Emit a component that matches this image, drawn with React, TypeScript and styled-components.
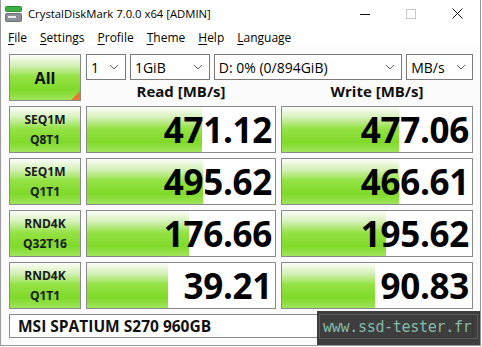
import React from 'react';
import styled, { createGlobalStyle } from 'styled-components';

// Types
interface Result {
  label: [string, string];
  read: number;
  write: number;
}

const results: Result[] = [
  { label: ['SEQ1M', 'Q8T1'], read: 471.12, write: 477.06 },
  { label: ['SEQ1M', 'Q1T1'], read: 495.62, write: 466.61 },
  { label: ['RND4K', 'Q32T16'], read: 176.66, write: 195.62 },
  { label: ['RND4K', 'Q1T1'], read: 39.21, write: 90.83 },
];

// log scale bar, like the app does
const barWidth = (v: number) => `${Math.min(100, (0.171 * Math.log10(v) + 0.157) * 100)}%`;

const GlobalStyle = createGlobalStyle`
  html, body {
    margin: 0;
    padding: 0;
    background: #ffffff;
  }
  body {
    font-family: "Open Sans", "Noto Sans", sans-serif;
  }
`;

const green = `linear-gradient(to bottom, #fbfdf8 0%, #d4f0b6 24%, #94e244 48%, #80d92a 78%, #9fe55a 100%)`;

// Styled Components
const Window = styled.div`
  position: relative;
  width: 481px;
  height: 346px;
  box-sizing: border-box;
  border-left: 1px solid #9a9a9a;
  border-right: 1px solid #9a9a9a;
  border-bottom: 1px solid #9a9a9a;
  background: #fbfbfb;
  overflow: hidden;
`;

const TitleBar = styled.div`
  display: flex;
  align-items: center;
  height: 27px;
  background: #ffffff;
  padding-left: 4px;
`;

const Title = styled.span`
  margin-left: 6px;
  font-size: 11.3px;
  color: #000;
  flex: 1;
`;

const Controls = styled.div`
  display: flex;
  height: 100%;
`;

const ControlButton = styled.div`
  width: 46px;
  display: flex;
  align-items: center;
  justify-content: center;
`;

const MenuBar = styled.div`
  display: flex;
  height: 20px;
  align-items: center;
  background: #ffffff;
  padding-left: 7px;
  gap: 13px;
  font-size: 12px;
  color: #000;
`;

const MenuItem = styled.span`
  u {
    text-decoration: underline;
    text-underline-offset: 2px;
  }
`;

const Body = styled.div`
  display: grid;
  grid-template-columns: 72px 190px 192px;
  grid-template-rows: 47px repeat(4, 47px) 24px;
  column-gap: 5px;
  row-gap: 5px;
  padding: 7px 0 0 8px;
`;

const AllButton = styled.div`
  position: relative;
  border: 1px solid #8a8a8a;
  background: ${green};
  display: flex;
  align-items: center;
  justify-content: center;
  font-size: 16px;
  font-weight: 700;
  color: #111;
  overflow: hidden;

  &::after {
    content: '';
    position: absolute;
    right: 0;
    bottom: 0;
    border-style: solid;
    border-width: 0 0 9px 9px;
    border-color: transparent transparent #e8782a transparent;
  }
`;

const TopArea = styled.div`
  grid-column: 2 / 4;
  display: grid;
  grid-template-columns: 190px 192px;
  grid-template-rows: 26px 1fr;
  column-gap: 5px;
`;

const Combos = styled.div`
  grid-column: 1 / 3;
  display: flex;
  gap: 4px;
`;

const Combo = styled.div<{ w: number }>`
  width: ${({ w }) => w}px;
  box-sizing: border-box;
  border: 1px solid #7a7a7a;
  background: #fff;
  display: flex;
  align-items: center;
  justify-content: space-between;
  padding: 0 6px 0 4px;
  font-size: 14px;
  color: #000;
`;

const Header = styled.div`
  display: flex;
  align-items: center;
  justify-content: center;
  font-size: 15px;
  font-weight: 700;
  color: #111;
`;

const LabelCell = styled.div`
  border: 1px solid #8a8a8a;
  background: ${green};
  display: flex;
  flex-direction: column;
  align-items: center;
  justify-content: center;
  font-size: 12px;
  font-weight: 700;
  line-height: 20px;
  color: #1a1a1a;
`;

const ValueCell = styled.div`
  position: relative;
  border: 1px solid #8a8a8a;
  background: #fff;
  overflow: hidden;
`;

const Bar = styled.div`
  position: absolute;
  left: 0;
  top: 0;
  bottom: 0;
  background: ${green};
`;

const Value = styled.div`
  position: relative;
  height: 100%;
  display: flex;
  align-items: center;
  justify-content: flex-end;
  padding-right: 3px;
  font-size: 35px;
  font-weight: 700;
  letter-spacing: -0.3px;
  color: #000;
`;

const ModelBox = styled.div`
  grid-column: 1 / 4;
  border: 1px solid #8a8a8a;
  background: #fff;
  display: flex;
  align-items: center;
  padding-left: 8px;
  font-size: 15.5px;
  font-weight: 700;
  color: #111;
`;

const Watermark = styled.div`
  position: absolute;
  left: 316px;
  top: 311px;
  width: 170px;
  height: 40px;
  background: rgba(52, 52, 52, 0.95);
  padding: 3px 0 0 2px;
  box-sizing: border-box;
`;

const WatermarkInner = styled.div`
  width: 154px;
  height: 23px;
  border: 1px solid #5a5a5a;
  display: flex;
  align-items: center;
  padding-left: 3px;
  font-family: "DejaVu Sans Mono", "Liberation Mono", monospace;
  font-size: 15px;
  letter-spacing: -0.3px;
  color: #86bcaa;
  white-space: nowrap;
`;

const Chevron = () => (
  <svg width="10" height="6" viewBox="0 0 10 6">
    <path d="M1 1 L5 5 L9 1" fill="none" stroke="#606060" strokeWidth="1" />
  </svg>
);

const AppIcon = () => (
  <svg width="17" height="16" viewBox="0 0 17 16">
    <rect x="0.5" y="0.5" width="16" height="5" rx="1" fill="#3cb043" stroke="#2a8a30" />
    <rect x="0.5" y="7.5" width="16" height="8" rx="1" fill="#8a9096" stroke="#6a7076" />
    <rect x="3" y="10" width="8" height="2" fill="#e8ecef" />
  </svg>
);

const App: React.FC = () => (
  <>
    <GlobalStyle />
    <Window>
      <TitleBar>
        <AppIcon />
        <Title>CrystalDiskMark 7.0.0 x64 [ADMIN]</Title>
        <Controls>
          <ControlButton>
            <svg width="10" height="10" viewBox="0 0 10 10">
              <path d="M0 5.5 H10" stroke="#111" strokeWidth="1" />
            </svg>
          </ControlButton>
          <ControlButton>
            <svg width="10" height="10" viewBox="0 0 10 10">
              <rect x="0.5" y="0.5" width="9" height="9" fill="none" stroke="#c8c8c8" />
            </svg>
          </ControlButton>
          <ControlButton>
            <svg width="11" height="11" viewBox="0 0 11 11">
              <path d="M0.5 0.5 L10.5 10.5 M10.5 0.5 L0.5 10.5" stroke="#111" strokeWidth="1" />
            </svg>
          </ControlButton>
        </Controls>
      </TitleBar>
      <MenuBar>
        <MenuItem><u>F</u>ile</MenuItem>
        <MenuItem><u>S</u>ettings</MenuItem>
        <MenuItem><u>P</u>rofile</MenuItem>
        <MenuItem><u>T</u>heme</MenuItem>
        <MenuItem><u>H</u>elp</MenuItem>
        <MenuItem><u>L</u>anguage</MenuItem>
      </MenuBar>
      <Body>
        <AllButton>All</AllButton>
        <TopArea>
          <Combos>
            <Combo w={40}>1<Chevron /></Combo>
            <Combo w={80}>1GiB<Chevron /></Combo>
            <Combo w={189}>D: 0% (0/894GiB)<Chevron /></Combo>
            <Combo w={67}>MB/s<Chevron /></Combo>
          </Combos>
          <Header>Read [MB/s]</Header>
          <Header>Write [MB/s]</Header>
        </TopArea>
        {results.map((r) => (
          <React.Fragment key={r.label.join('')}>
            <LabelCell>
              <span>{r.label[0]}</span>
              <span>{r.label[1]}</span>
            </LabelCell>
            <ValueCell>
              <Bar style={{ width: barWidth(r.read) }} />
              <Value>{r.read.toFixed(2)}</Value>
            </ValueCell>
            <ValueCell>
              <Bar style={{ width: barWidth(r.write) }} />
              <Value>{r.write.toFixed(2)}</Value>
            </ValueCell>
          </React.Fragment>
        ))}
        <ModelBox>MSI SPATIUM S270 960GB</ModelBox>
      </Body>
      <Watermark>
        <WatermarkInner>www.ssd-tester.fr</WatermarkInner>
      </Watermark>
    </Window>
  </>
);

export default App;
